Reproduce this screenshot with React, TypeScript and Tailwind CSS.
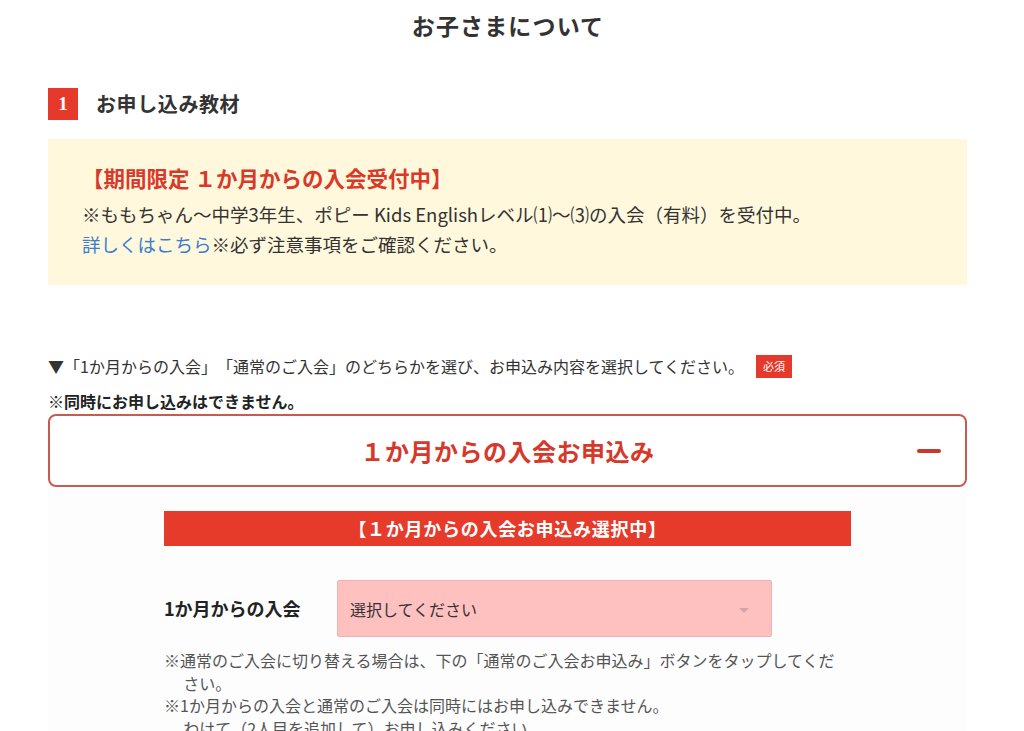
export default function App() {
  return (
    <div
      className="min-h-screen bg-white text-[#333] [text-spacing-trim:space-all]"
      style={{ fontFamily: '"Noto Sans CJK JP", "Noto Sans", sans-serif' }}
    >
      {/* Page title */}
      <div className="flex h-[50px] items-center justify-center">
        <h1 className="-ml-[8px] text-[23px] font-bold leading-none tracking-[0.05em] text-[#333]">
          お子さまについて
        </h1>
      </div>

      <div className="ml-[48px] w-[919px]">
        {/* Section heading */}
        <div className="mt-[38px] flex items-center">
          <span
            className="flex h-[32px] w-[30px] items-center justify-center bg-[#e53a2b] text-[19px] font-bold text-white"
            style={{ fontFamily: '"Liberation Serif", serif' }}
          >
            1
          </span>
          <h2 className="ml-[18px] text-[20px] font-bold leading-none tracking-[0.03em] text-[#333]">
            お申し込み教材
          </h2>
        </div>

        {/* Campaign notice */}
        <div className="mt-[19px] bg-[#fff8dc] px-[34px] pb-[26px] pt-[24px]">
          <p className="mb-[6px] text-[21.5px] font-bold leading-[30px] text-[#d9392a]">
            【期間限定 １か月からの入会受付中】
          </p>
          <p className="text-[18.5px] leading-[30px] text-[#333]">
            ※ももちゃん～中学3年生、ポピー Kids Englishレベル⑴～⑶の入会（有料）を受付中。
          </p>
          <p className="text-[18.5px] leading-[30px] text-[#333]">
            <a href="#" className="text-[#3b7dd0]">
              詳しくはこちら
            </a>
            ※必ず注意事項をご確認ください。
          </p>
        </div>

        {/* Instruction */}
        <div className="mt-[69px] flex h-[24px] items-center text-[16px] text-[#333]">
          <span>▼「1か月からの入会」「通常のご入会」のどちらかを選び、お申込み内容を選択してください。</span>
          <span className="ml-[12px] flex h-[23px] w-[36px] items-center justify-center bg-[#e53a2b] text-[11px] text-white">
            必須
          </span>
        </div>
        <p className="mt-[11px] text-[16px] font-bold leading-[24px] text-[#222]">
          ※同時にお申し込みはできません。
        </p>

        {/* Accordion header */}
        <button className="relative mt-[1px] flex h-[73px] w-full items-center justify-center rounded-[8px] border-2 border-[#c85a50] bg-white">
          <span className="text-[24px] font-bold tracking-[0.02em] text-[#d6392b]">
            １か月からの入会お申込み
          </span>
          <span className="absolute right-[24px] top-1/2 h-[4px] w-[24px] -translate-y-1/2 rounded-full bg-[#c9392b]" />
        </button>

        {/* Accordion body */}
        <div className="mt-[3px] bg-[#fdfdfd] pt-[21px]">
          <div className="mx-auto w-[687px]">
            <div className="flex h-[35px] items-center justify-center bg-[#e63a2a] text-[18px] font-bold tracking-[0.04em] text-white">
              【１か月からの入会お申込み選択中】
            </div>

            <div className="mt-[34px] flex items-center">
              <span className="w-[173px] text-[18px] font-bold text-[#222]">1か月からの入会</span>
              <div className="relative flex h-[57px] w-[435px] items-center rounded-[2px] border border-[#e8b4b4] bg-[#ffc0c0] px-[12px] text-[16px] text-[#333]">
                選択してください
                <span className="absolute right-[22px] top-[27px] h-0 w-0 border-x-[5px] border-t-[5px] border-x-transparent border-t-[#d2a6a6]" />
              </div>
            </div>

            <div className="mt-[12px] pr-[10px] text-[16px] leading-[22.5px] text-[#555]">
              <p className="pl-[1.2em] -indent-[1.2em]">
                ※通常のご入会に切り替える場合は、下の「通常のご入会お申込み」ボタンをタップしてください。
              </p>
              <p className="pl-[1.2em] -indent-[1.2em]">
                ※1か月からの入会と通常のご入会は同時にはお申し込みできません。
                <br />
                わけて（2人目を追加して）お申し込みください。
              </p>
            </div>
          </div>
        </div>
      </div>
    </div>
  );
}
